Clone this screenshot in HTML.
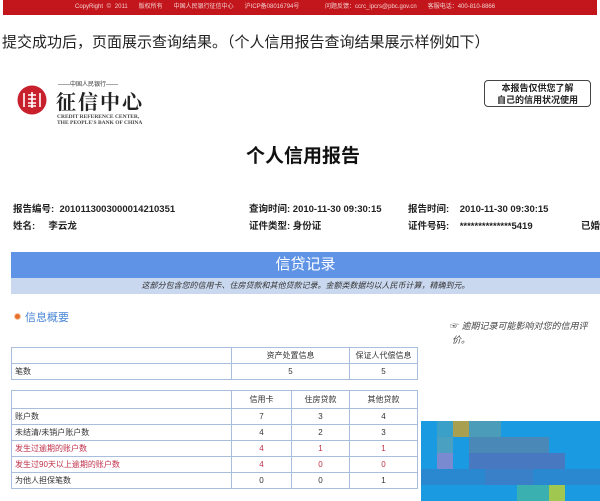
<!DOCTYPE html>
<html><head><meta charset="utf-8"><style>
*{margin:0;padding:0;box-sizing:border-box}
body{width:600px;height:501px;background:#fff;position:relative;overflow:hidden;font-family:"Liberation Sans","Noto Sans CJK SC",sans-serif;color:#222}
.a{position:absolute;white-space:nowrap}
.red{left:3px;top:0;width:594px;height:15px;background:#c3161c;color:#f3d0d0;font-size:6px;line-height:15px;padding-left:72px;word-spacing:2px}
.info{font-size:9.5px;font-weight:bold;color:#222}
table{border-collapse:collapse;position:absolute;font-size:8px;color:#333}
td{border:1px solid #a9bedc;height:16px;text-align:center}
td:first-child{text-align:left;padding-left:3px}
.r td{color:#c0304a}
</style></head><body>
<div class="a red">CopyRight © 2011 &nbsp; 版权所有 &nbsp; 中国人民银行征信中心 &nbsp; 沪ICP备08016794号 &nbsp; &nbsp; &nbsp; 问题反馈：ccrc_ipcrs@pbc.gov.cn &nbsp; 客服电话：400-810-8866</div>
<div class="a" style="left:2px;top:31px;font-size:15px;color:#222">提交成功后，页面展示查询结果。（个人信用报告查询结果展示样例如下）</div>

<svg class="a" style="left:17px;top:85px" width="30" height="30" viewBox="0 0 30 30"><circle cx="15" cy="15" r="14.5" fill="#c8202c"/><path d="M7 8v14M23 8v14M11 10h8M11 14h8M11 18h8M11 21h8M15 7v16" stroke="#fff" stroke-width="1.6" fill="none"/></svg>
<div class="a" style="left:58px;top:79px;font-size:6px;color:#333">——中国人民银行——</div>
<div class="a" style="left:56px;top:86px;font-size:20px;font-weight:bold;color:#222;font-family:'Noto Serif CJK SC',serif;letter-spacing:2px">征信中心</div>
<div class="a" style="left:57px;top:114px;font-size:5.5px;line-height:6px;color:#444;font-family:'Liberation Serif',serif;font-weight:bold">CREDIT REFERENCE CENTER,<br>THE PEOPLE'S BANK OF CHINA</div>
<div class="a" style="left:484px;top:80px;width:107px;height:27px;border:1.5px solid #444;border-radius:4px;font-size:9px;font-weight:bold;line-height:12px;text-align:center;padding-top:1px;color:#222">本报告仅供您了解<br>自己的信用状况使用</div>

<div class="a" style="left:246px;top:141px;font-size:19px;font-weight:bold;color:#111">个人信用报告</div>

<div class="a info" style="left:13px;top:201px">报告编号: &nbsp;2010113003000014210351</div>
<div class="a info" style="left:13px;top:218px">姓名: &nbsp; &nbsp; 李云龙</div>
<div class="a info" style="left:249px;top:201px">查询时间: 2010-11-30 09:30:15</div>
<div class="a info" style="left:249px;top:218px">证件类型: 身份证</div>
<div class="a info" style="left:408px;top:201px">报告时间: &nbsp; &nbsp;2010-11-30 09:30:15</div>
<div class="a info" style="left:408px;top:218px">证件号码: &nbsp; &nbsp;**************5419</div>
<div class="a info" style="left:581px;top:218px">已婚</div>

<div class="a" style="left:11px;top:252px;width:589px;height:26px;background:#5e93e6;color:#fff;font-size:15px;text-align:center;line-height:26px">信贷记录</div>
<div class="a" style="left:11px;top:278px;width:589px;height:16px;background:#c9d8ef;color:#333;font-size:8px;font-style:italic;text-align:center;line-height:16px">这部分包含您的信用卡、住房贷款和其他贷款记录。金额类数据均以人民币计算，精确到元。</div>

<div class="a" style="left:14px;top:313px;width:7px;height:7px;border-radius:50%;background:#e8702a;border:1.5px solid #f5c9a8"></div>
<div class="a" style="left:25px;top:309px;font-size:11px;color:#4a86d6">信息概要</div>
<div class="a" style="left:450px;top:319px;font-size:9px;color:#444"><span style="font-style:normal">☞</span> <i>逾期记录可能影响对您的信用评</i></div>
<div class="a" style="left:452px;top:333px;font-size:9px;color:#444;font-style:italic">价。</div>

<table style="left:11px;top:347px;width:407px">
<tr><td style="width:220px"></td><td style="width:118px">资产处置信息</td><td>保证人代偿信息</td></tr>
<tr><td>笔数</td><td>5</td><td>5</td></tr>
</table>
<table style="left:11px;top:390px;width:407px">
<tr style="height:18px"><td style="width:220px"></td><td style="width:60px">信用卡</td><td style="width:58px">住房贷款</td><td>其他贷款</td></tr>
<tr><td>账户数</td><td>7</td><td>3</td><td>4</td></tr>
<tr><td>未结清/未销户账户数</td><td>4</td><td>2</td><td>3</td></tr>
<tr class="r"><td>发生过逾期的账户数</td><td>4</td><td>1</td><td>1</td></tr>
<tr class="r"><td>发生过90天以上逾期的账户数</td><td>4</td><td>0</td><td>0</td></tr>
<tr><td>为他人担保笔数</td><td>0</td><td>0</td><td>1</td></tr>
</table>

<svg class="a" style="left:421px;top:421px" width="179" height="80">
<rect width="179" height="80" fill="#1a9ae0"/>
<rect x="16" y="0" width="16" height="16" fill="#3aa0c8"/><rect x="32" y="0" width="16" height="16" fill="#a8a050"/><rect x="48" y="0" width="32" height="16" fill="#4a9cb8"/>
<rect x="16" y="16" width="16" height="16" fill="#4aa0c0"/><rect x="48" y="16" width="80" height="16" fill="#4a88b8"/>
<rect x="16" y="32" width="16" height="16" fill="#7a8ad0"/><rect x="48" y="32" width="96" height="16" fill="#4878c0"/>
<rect x="0" y="48" width="179" height="16" fill="#2a88d0"/><rect x="64" y="48" width="48" height="16" fill="#3a80c8"/>
<rect x="96" y="64" width="32" height="16" fill="#3ab0b0"/><rect x="128" y="64" width="16" height="16" fill="#a0c850"/>
</svg>
</body></html>
